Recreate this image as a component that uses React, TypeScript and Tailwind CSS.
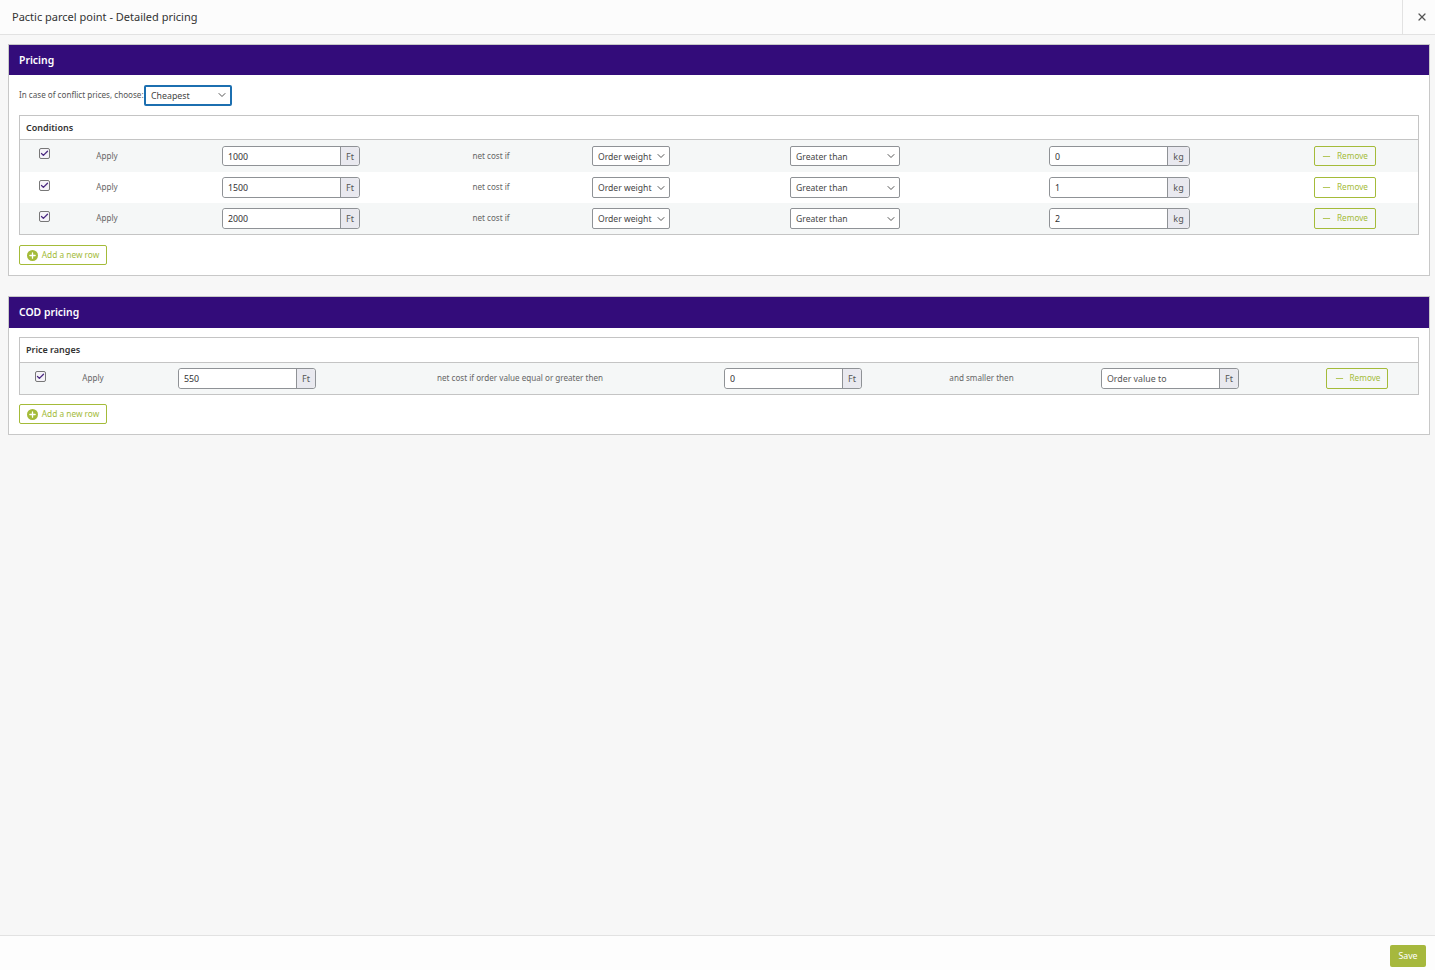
import { Check, ChevronDown, Minus, Plus, X } from "lucide-react";

const font = "font-['Noto_Sans','Open_Sans',sans-serif]";

function Checkbox() {
  return (
    <span className="mb-[5px] flex h-[11px] w-[11px] items-center justify-center rounded-[2px] border border-[#777] bg-[#f5f3f8]">
      <Check className="h-[9px] w-[9px] text-[#4b2a80]" strokeWidth={3.5} />
    </span>
  );
}

function UnitInput({ value, unit, placeholder, height = "h-[20px]" }: { value?: string; unit: string; placeholder?: string; height?: string }) {
  return (
    <div className={`flex rounded-[3px] border border-[#8f9296] bg-white ${height}`}>
      <input
        readOnly
        value={value ?? ""}
        placeholder={placeholder}
        className="w-[118px] min-w-0 rounded-l-[3px] border-r border-[#8f9296] bg-white px-[5px] pt-[3px] text-[8.8px] text-[#333] outline-none placeholder:text-[#555]"
      />
      <span className={`flex items-center justify-center rounded-r-[3px] bg-[#e9e9ef] pt-[1px] text-[9px] text-[#555] ${unit === "kg" ? "w-[21px]" : "w-[18px]"}`}>{unit}</span>
    </div>
  );
}

function Select({ label, width, height = "h-[20px]" }: { label: string; width: string; height?: string }) {
  return (
    <button className={`flex items-center justify-between whitespace-nowrap rounded-[2px] border border-[#8f9296] bg-white pl-[5px] pr-[2px] text-[8.6px] text-[#444] ${width} ${height}`}>
      <span className="pt-[2px]">{label}</span>
      <ChevronDown className="h-[12px] w-[12px] text-[#555]" strokeWidth={2} />
    </button>
  );
}

function RemoveButton({ shift, height = "h-[20px]" }: { shift: string; height?: string }) {
  return (
    <button className={`flex w-[62px] items-center justify-center gap-[5px] rounded-[2px] border border-[#a4bb39] text-[8.2px] text-[#a4bb39] ${shift} ${height}`}>
      <Minus className="h-[11px] w-[11px]" strokeWidth={1.8} />
      Remove
    </button>
  );
}

function AddRow() {
  return (
    <button className="flex h-[20px] w-[88px] items-center justify-center gap-[4px] rounded-[2px] border border-[#a4bb39] bg-white text-[8.3px] text-[#a4bb39]">
      <span className="flex h-[11px] w-[11px] items-center justify-center rounded-full bg-[#a4bb39]">
        <Plus className="h-[9px] w-[9px] text-white" strokeWidth={3.5} />
      </span>
      Add a new row
    </button>
  );
}

function Label({ children }: { children: string }) {
  return <span className="text-[8.1px] text-[#666]">{children}</span>;
}

const conditions = [
  { price: "1000", from: "0", rowH: "h-[32px]", ctlH: "h-[20px]", bg: "bg-[#f5f7f7]" },
  { price: "1500", from: "1", rowH: "h-[31px]", ctlH: "h-[21px]", bg: "bg-white" },
  { price: "2000", from: "2", rowH: "h-[31px]", ctlH: "h-[21px]", bg: "bg-[#f5f7f7]" },
];

export default function App() {
  return (
    <div className={`flex h-[970px] flex-col bg-[#f7f7f7] ${font}`}>
      {/* Header */}
      <header className="flex h-[35px] shrink-0 items-center justify-between border-b border-[#e2e2e2] bg-[#fcfcfc]">
        <h1 className="pl-[12px] pt-[1px] text-[11px] text-[#333]">Pactic parcel point - Detailed pricing</h1>
        <div className="flex h-full w-[33px] items-center justify-center border-l border-[#e2e2e2] pl-[5px]">
          <X className="h-[12px] w-[12px] text-[#555]" strokeWidth={2.5} />
        </div>
      </header>

      <main className="flex-1 px-[8px] pt-[9px]">
        {/* Pricing */}
        <section className="mr-[-3px] h-[232px] border border-[#c8c8c8] bg-white">
          <h2 className="flex h-[30px] items-center bg-[#330c7a] pl-[10px] pt-[1px] text-[10.4px] font-semibold text-white">Pricing</h2>
          <div className="px-[10px]">
            <div className="flex h-[40px] items-center">
              <span className="w-[125px] whitespace-nowrap pt-[1px] text-[8.1px] text-[#555]">In case of conflict prices, choose:</span>
              <button className="flex h-[21px] w-[88px] items-center justify-between rounded-[2px] border-2 border-[#1c6fb0] bg-white pl-[5px] pr-[2px] text-[8.8px] text-[#444]">
                <span className="pt-[3px]">Cheapest</span>
                <ChevronDown className="h-[12px] w-[12px] text-[#555]" strokeWidth={2} />
              </button>
            </div>
            <div className="border border-[#c4c4c4]">
              <div className="flex h-[24px] items-center border-b border-[#c4c4c4] pl-[6px] text-[9px] font-semibold text-[#333]">Conditions</div>
              {conditions.map((row) => (
                <div key={row.price} className={`grid grid-cols-[48px_78px_290px_110px_170px_258px_291px_153px] items-center justify-items-center ${row.rowH} ${row.bg}`}>
                  <Checkbox />
                  <Label>Apply</Label>
                  <UnitInput value={row.price} unit="Ft" height={row.ctlH} />
                  <Label>net cost if</Label>
                  <Select label="Order weight" width="w-[78px]" height={row.ctlH} />
                  <Select label="Greater than" width="w-[110px]" height={row.ctlH} />
                  <UnitInput value={row.from} unit="kg" height={row.ctlH} />
                  <RemoveButton shift="ml-[6px]" height={row.ctlH} />
                </div>
              ))}
            </div>
            <div className="pt-[10px]">
              <AddRow />
            </div>
          </div>
        </section>

        {/* COD pricing */}
        <section className="mr-[-3px] mt-[20px] h-[139px] border border-[#c8c8c8] bg-white">
          <h2 className="flex h-[31px] items-center bg-[#330c7a] pl-[10px] text-[10.4px] font-semibold text-white">COD pricing</h2>
          <div className="px-[10px] pt-[9px]">
            <div className="border border-[#c4c4c4]">
              <div className="flex h-[25px] items-center border-b border-[#c4c4c4] pl-[6px] text-[9px] font-semibold text-[#333]">Price ranges</div>
              <div className="grid h-[31px] grid-cols-[41px_64px_244px_302px_244px_133px_244px_126px] items-center justify-items-center bg-[#f5f7f7]">
                <Checkbox />
                <Label>Apply</Label>
                <UnitInput value="550" unit="Ft" height="h-[21px]" />
                <Label>net cost if order value equal or greater then</Label>
                <UnitInput value="0" unit="Ft" height="h-[21px]" />
                <Label>and smaller then</Label>
                <UnitInput placeholder="Order value to" unit="Ft" height="h-[21px]" />
                <RemoveButton shift="ml-[4px]" height="h-[21px]" />
              </div>
            </div>
            <div className="pt-[9px]">
              <AddRow />
            </div>
          </div>
        </section>
      </main>

      {/* Footer */}
      <footer className="flex h-[35px] shrink-0 items-center justify-end border-t border-[#e2e2e2] bg-[#fdfdfd] pr-[9px] pt-[6px]">
        <button className="h-[22px] w-[36px] rounded-[2px] bg-[#a6b83d] pt-[2px] text-[8.8px] text-white">Save</button>
      </footer>
    </div>
  );
}
